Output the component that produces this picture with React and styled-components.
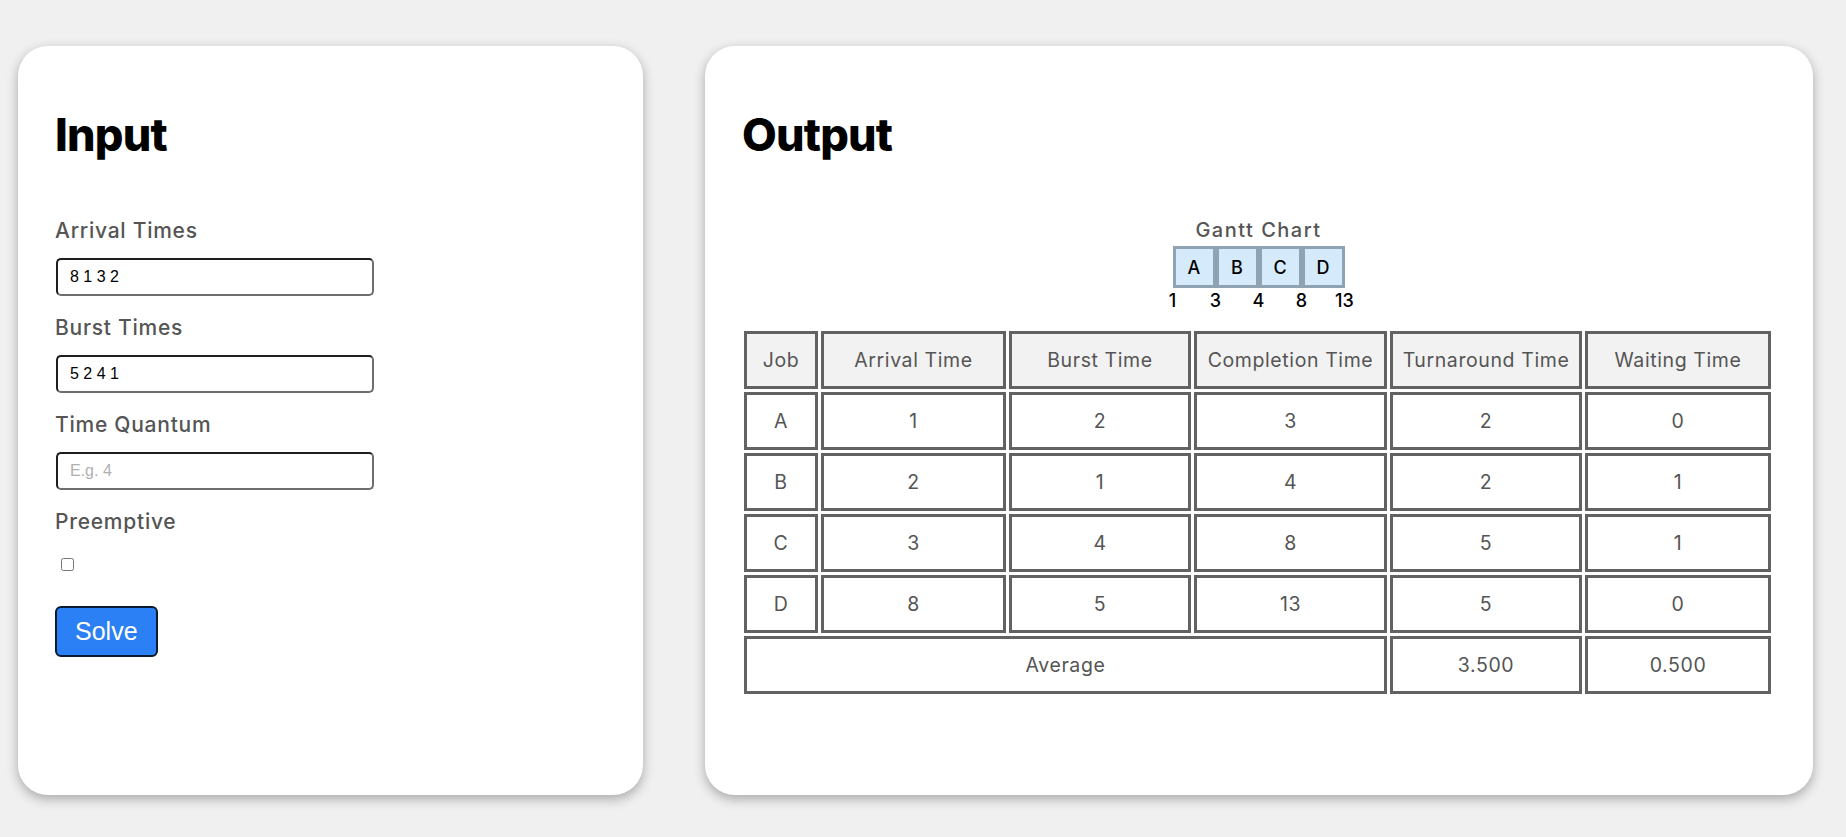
import styled, { createGlobalStyle } from 'styled-components'

const GlobalStyle = createGlobalStyle`
  *{ box-sizing: border-box; }
  body{
    margin: 0;
    background: #f0f0f0;
    font-family: Inter, "Noto Sans", sans-serif;
  }
`

const jobs = [
  { name: "A", arrival: 1, burst: 2, completion: 3, turnaround: 2, waiting: 0 },
  { name: "B", arrival: 2, burst: 1, completion: 4, turnaround: 2, waiting: 1 },
  { name: "C", arrival: 3, burst: 4, completion: 8, turnaround: 5, waiting: 1 },
  { name: "D", arrival: 8, burst: 5, completion: 13, turnaround: 5, waiting: 0 },
]

const columns = [
  { label: "Job", width: 74 },
  { label: "Arrival Time", width: 185 },
  { label: "Burst Time", width: 182 },
  { label: "Completion Time", width: 193 },
  { label: "Turnaround Time", width: 192 },
  { label: "Waiting Time", width: 186 },
]

const gantt = ["A", "B", "C", "D"]
const ticks = [1, 3, 4, 8, 13]

const App = () => {
  return (
    <>
      <GlobalStyle />
      <Page>
        <InputCard>
          <Title>Input</Title>
          <Label>Arrival Times</Label>
          <TextInput defaultValue="8 1 3 2" />
          <Label>Burst Times</Label>
          <TextInput defaultValue="5 2 4 1" />
          <Label>Time Quantum</Label>
          <TextInput placeholder="E.g. 4" />
          <Label>Preemptive</Label>
          <Check type="checkbox" />
          <SolveBtn>Solve</SolveBtn>
        </InputCard>

        <OutputCard>
          <Title>Output</Title>
          <Gantt>
            <GanttTitle>Gantt Chart</GanttTitle>
            <GanttRow>
              {gantt.map((g) => <GanttBox key={g}>{g}</GanttBox>)}
            </GanttRow>
            <Ticks>
              {ticks.map((t) => <span key={t}>{t}</span>)}
            </Ticks>
          </Gantt>

          <Table>
            <thead>
              <tr>
                {columns.map((c) => (
                  <Th key={c.label} $w={c.width}>{c.label}</Th>
                ))}
              </tr>
            </thead>
            <tbody>
              {jobs.map((j) => (
                <tr key={j.name}>
                  <Td>{j.name}</Td>
                  <Td>{j.arrival}</Td>
                  <Td>{j.burst}</Td>
                  <Td>{j.completion}</Td>
                  <Td>{j.turnaround}</Td>
                  <Td>{j.waiting}</Td>
                </tr>
              ))}
              <tr>
                <Td colSpan={4}>Average</Td>
                <Td>3.500</Td>
                <Td>0.500</Td>
              </tr>
            </tbody>
          </Table>
        </OutputCard>
      </Page>
    </>
  )
}

export default App

const Page = styled.div`
  display: flex;
  gap: 62px;
  padding: 46px 33px 42px 18px;
`

const Card = styled.section`
  background: #fff;
  border-radius: 30px;
  height: 749px;
  padding: 62px 38px 0 37px;
  box-shadow: 0 4px 12px rgba(0, 0, 0, 0.3);
`

const InputCard = styled(Card)`
  width: 625px;
  flex-shrink: 0;
  display: flex;
  flex-direction: column;
  align-items: flex-start;
`

const OutputCard = styled(Card)`
  flex: 1;
`

const Title = styled.h1`
  margin: 0 0 56px;
  font-size: 45px;
  line-height: 54px;
  font-weight: 800;
  letter-spacing: -0.8px;
  color: #000;
`

const Label = styled.div`
  font-size: 21px;
  line-height: 26px;
  font-weight: 500;
  letter-spacing: 0.75px;
  color: #555;
  margin-bottom: 14px;
`

const TextInput = styled.input`
  width: 318px;
  height: 38px;
  margin: 0 0 19px 1px;
  padding: 0 12px;
  font-family: "Liberation Sans", Arial, sans-serif;
  font-size: 16px;
  color: #000;
  border: 2px solid;
  border-color: #1e1e1e #6e6e6e #6e6e6e #1e1e1e;
  border-radius: 5px;
  outline: none;

  &::placeholder{
    color: #b0b0b0;
  }
`

const Check = styled.input`
  width: 13px;
  height: 13px;
  margin: 9px 0 0 6px;
`

const SolveBtn = styled.button`
  margin-top: 35px;
  padding: 0 18px;
  height: 51px;
  background: #2a80f4;
  color: #fff;
  border: 2px solid #0b1a30;
  border-radius: 6px;
  font-family: "Liberation Sans", Arial, sans-serif;
  font-size: 25px;
`

const Gantt = styled.div`
  display: flex;
  flex-direction: column;
  align-items: center;
  margin-top: 4px;
`

const GanttTitle = styled.div`
  font-size: 20px;
  line-height: 24px;
  font-weight: 500;
  letter-spacing: 1.5px;
  color: #555;
  margin-bottom: 4px;
`

const GanttRow = styled.div`
  display: flex;
`

const GanttBox = styled.div`
  width: 43px;
  height: 42px;
  display: flex;
  align-items: center;
  justify-content: center;
  background: #d5eafa;
  border: 3px solid #8fa3b3;
  font-size: 18px;
  font-weight: 500;
  color: #000;
`

const Ticks = styled.div`
  display: grid;
  grid-template-columns: repeat(5, 43px);
  margin-top: 2px;
  font-size: 18px;
  line-height: 21px;
  font-weight: 500;
  color: #000;

  span{
    text-align: center;
  }
`

const Table = styled.table`
  margin: 17px 0 0 -1px;
  border-spacing: 3px;
  table-layout: fixed;
  color: #555;
  font-size: 19.5px;
  letter-spacing: 0.6px;
`

const Th = styled.th`
  width: ${({ $w }) => $w}px;
  height: 58px;
  background: #f2f2f2;
  border: 3px solid #626262;
  font-weight: 400;
  text-align: center;
`

const Td = styled.td`
  height: 58px;
  border: 3px solid #626262;
  text-align: center;
`
